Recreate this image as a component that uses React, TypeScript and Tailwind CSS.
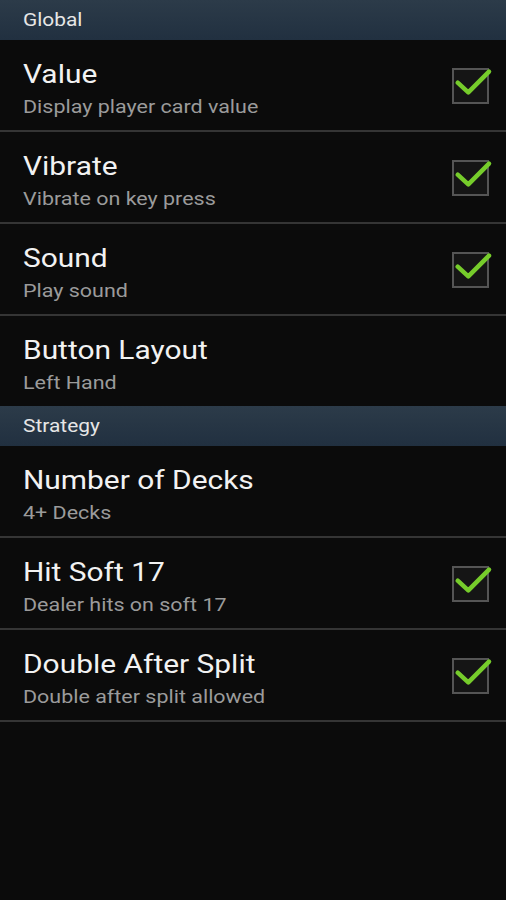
import React from 'react';

type Pref = { title: string; summary: string; checked?: boolean };
type Section = { name: string; items: Pref[] };

const sections: Section[] = [
  {
    name: 'Global',
    items: [
      { title: 'Value', summary: 'Display player card value', checked: true },
      { title: 'Vibrate', summary: 'Vibrate on key press', checked: true },
      { title: 'Sound', summary: 'Play sound', checked: true },
      { title: 'Button Layout', summary: 'Left Hand' },
    ],
  },
  {
    name: 'Strategy',
    items: [
      { title: 'Number of Decks', summary: '4+ Decks' },
      { title: 'Hit Soft 17', summary: 'Dealer hits on soft 17', checked: true },
      { title: 'Double After Split', summary: 'Double after split allowed', checked: true },
    ],
  },
];

// android holo checkbox, green tick runs over the top-right corner
const CheckBox = () => (
  <div className="relative w-[37px] h-[36px] border-2 border-[#555555] bg-[#151515]">
    <svg viewBox="0 0 37 36" className="absolute -top-[2px] -left-[2px] w-[37px] h-[36px] overflow-visible">
      <path d="M5.7 14.7 L16.3 24.3 L37 3.7" fill="none" stroke="#76cc2b" strokeWidth="4.5" strokeLinecap="round" strokeLinejoin="round" />
    </svg>
  </div>
);

export default function App() {
  return (
    <div className="w-[506px] h-[900px] bg-[#0b0b0b] overflow-hidden" style={{ fontFamily: 'Roboto, "Noto Sans", sans-serif' }}>
      {sections.map((s, si) => (
        <div key={s.name}>
          <div className="h-10 flex items-center pl-[23px] bg-gradient-to-b from-[#2c3b49] to-[#213040] text-[19px] leading-6 text-[#e6e6e6]">
            <span className="origin-left scale-x-[1.1]">{s.name}</span>
          </div>
          {s.items.map((p, i) => {
            const last = si === 0 && i === s.items.length - 1;
            return (
              <div
                key={p.title}
                className={`flex items-start justify-between pl-[23px] pr-[17px] ${last ? 'h-[90px]' : 'h-[92px] border-b-2 border-[#353535]'}`}
              >
                <div className="flex flex-col items-start pt-[19px]">
                  <span className="text-[26px] leading-[30px] text-[#f2f2f2] origin-left scale-x-[1.15]">{p.title}</span>
                  <span className="text-[19px] leading-6 mt-[6px] text-[#9b9b9b] origin-left scale-x-[1.13]">{p.summary}</span>
                </div>
                {p.checked && (
                  <div className="pt-[28px]">
                    <CheckBox />
                  </div>
                )}
              </div>
            );
          })}
        </div>
      ))}
    </div>
  );
}
